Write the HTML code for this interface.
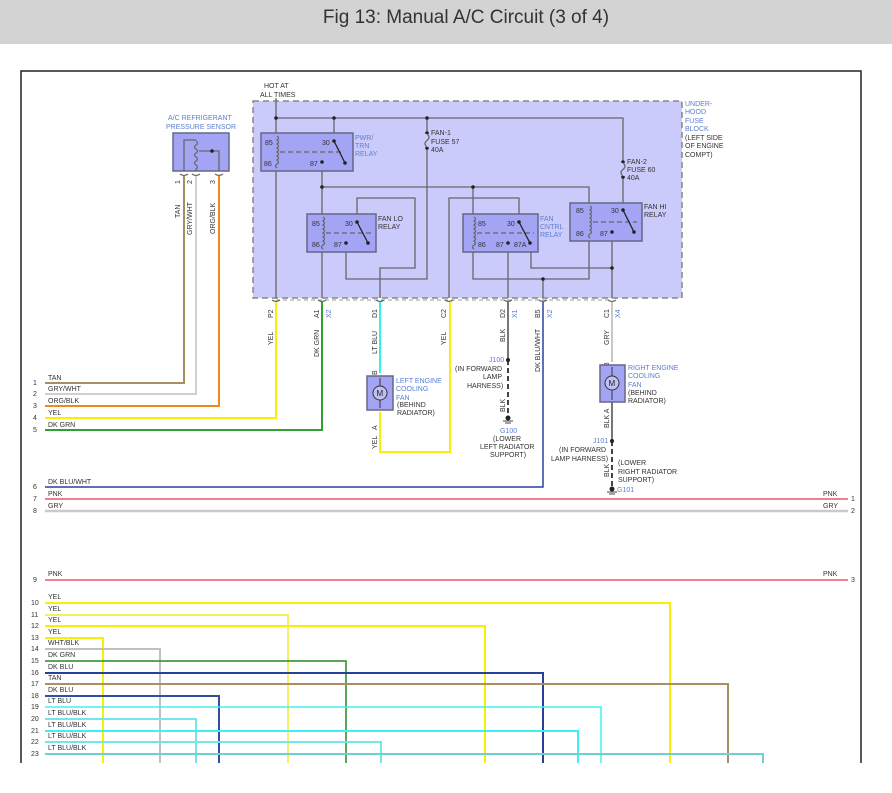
<!DOCTYPE html>
<html><head><meta charset="utf-8"><style>
html,body{margin:0;padding:0;background:#fff;}
svg{display:block;font-family:"Liberation Sans",sans-serif;}
.t{font-size:7px;fill:#333;}
.b{font-size:7px;fill:#5a7fd0;}
.g{stroke:#666;stroke-width:1.3;fill:none;}
.rl{fill:#a4a4f4;stroke:#666688;stroke-width:1.5;}
</style></head><body>
<svg width="892" height="793" viewBox="0 0 892 793" xmlns="http://www.w3.org/2000/svg">
<rect x="0" y="0" width="892" height="44" fill="#d3d3d3"/>
<text x="466" y="23" font-size="19" fill="#333" text-anchor="middle">Fig 13: Manual A/C Circuit (3 of 4)</text>
<!-- frame -->
<path d="M21,763 V71 H861 V763" fill="none" stroke="#222" stroke-width="1.5"/>

<!-- fuse block -->
<rect x="253" y="101" width="429" height="197" fill="#cbcbfb" stroke="#888" stroke-width="1.5" stroke-dasharray="6,4"/>
<text class="t" x="264" y="88">HOT AT</text><text class="t" x="260" y="97">ALL TIMES</text>
<text class="b" x="685" y="106">UNDER-</text><text class="b" x="685" y="114">HOOD</text><text class="b" x="685" y="123">FUSE</text><text class="b" x="685" y="131">BLOCK</text>
<text class="t" x="685" y="140">(LEFT SIDE</text><text class="t" x="685" y="148">OF ENGINE</text><text class="t" x="685" y="157">COMPT)</text>

<!-- internal wiring -->
<g class="g">
<path d="M276,98 V298"/>
<path d="M276,118 H623 V203"/>
<path d="M334,118 V133"/>
<path d="M427,118 V279 H346 V252"/>
<path d="M322,171 V298"/>
<path d="M322,187 H589 V203"/>
<path d="M473,187 V214"/>
<path d="M357,214 V198 H415 V268 H380 V298"/>
<path d="M519,214 V198 H449 V298"/>
<path d="M473,252 V279 H589 V241"/>
<path d="M543,279 V298"/>
<path d="M508,252 V298"/>
<path d="M531,252 V268 H612"/>
<path d="M612,241 V298"/>
</g>
<g fill="#222">
<circle cx="276" cy="118" r="1.8"/><circle cx="334" cy="118" r="1.8"/><circle cx="427" cy="118" r="1.8"/>
<circle cx="322" cy="187" r="1.8"/><circle cx="473" cy="187" r="1.8"/><circle cx="543" cy="279" r="1.8"/><circle cx="612" cy="268" r="1.8"/>
<circle cx="427" cy="133" r="1.8"/><circle cx="427" cy="148" r="1.8"/><circle cx="623" cy="162" r="1.8"/><circle cx="623" cy="177" r="1.8"/>
</g>
<!-- fuses -->
<rect x="424" y="134" width="6" height="13" fill="#cbcbfb"/><path d="M427,134 q4,3 0,6.5 q-4,3 0,6.5" class="g"/>
<rect x="620" y="163" width="6" height="13" fill="#cbcbfb"/><path d="M623,163 q4,3 0,6.5 q-4,3 0,6.5" class="g"/>
<text class="t" x="431" y="135">FAN-1</text><text class="t" x="431" y="144">FUSE 57</text><text class="t" x="431" y="152">40A</text>
<text class="t" x="627" y="164">FAN-2</text><text class="t" x="627" y="172">FUSE 60</text><text class="t" x="627" y="180">40A</text>

<!-- relays -->
<rect class="rl" x="261" y="133" width="92" height="38"/>
<rect class="rl" x="307" y="214" width="69" height="38"/>
<rect class="rl" x="463" y="214" width="75" height="38"/>
<rect class="rl" x="570" y="203" width="72" height="38"/>
<g class="g" stroke-width="1">
<path d="M277,136 q3,2 0,4 q3,2 0,4 q3,2 0,4 q3,2 0,4 q3,2 0,4 q3,2 0,4 q3,2 0,4 q-3,2 0,4" />
<path d="M323,217 q3,2 0,4 q3,2 0,4 q3,2 0,4 q3,2 0,4 q3,2 0,4 q3,2 0,4 q3,2 0,4 q-3,2 0,4"/>
<path d="M474,217 q3,2 0,4 q3,2 0,4 q3,2 0,4 q3,2 0,4 q3,2 0,4 q3,2 0,4 q3,2 0,4 q-3,2 0,4"/>
<path d="M590,206 q3,2 0,4 q3,2 0,4 q3,2 0,4 q3,2 0,4 q3,2 0,4 q3,2 0,4 q3,2 0,4 q-3,2 0,4"/>
<path d="M280,152 H342 M326,233 H372 M477,233 H534 M593,222 H637" stroke-dasharray="5,3"/>
</g>
<g stroke="#222" stroke-width="1.3">
<path d="M334,141 L345,163"/><path d="M357,222 L368,243"/><path d="M519,222 L530,243"/><path d="M623,210 L634,232"/>
</g>
<g fill="#222">
<circle cx="334" cy="141" r="1.8"/><circle cx="345" cy="163" r="1.8"/><circle cx="322" cy="162" r="1.8"/>
<circle cx="357" cy="222" r="1.8"/><circle cx="368" cy="243" r="1.8"/><circle cx="346" cy="243" r="1.8"/>
<circle cx="519" cy="222" r="1.8"/><circle cx="530" cy="243" r="1.8"/><circle cx="508" cy="243" r="1.8"/>
<circle cx="623" cy="210" r="1.8"/><circle cx="634" cy="232" r="1.8"/><circle cx="612" cy="232" r="1.8"/>
</g>
<g class="t">
<text x="265" y="145">85</text><text x="264" y="166">86</text><text x="322" y="145">30</text><text x="310" y="166">87</text>
<text x="312" y="226">85</text><text x="312" y="247">86</text><text x="345" y="226">30</text><text x="334" y="247">87</text>
<text x="478" y="226">85</text><text x="478" y="247">86</text><text x="507" y="226">30</text><text x="496" y="247">87</text><text x="514" y="247">87A</text>
<text x="576" y="213">85</text><text x="576" y="236">86</text><text x="611" y="213">30</text><text x="600" y="236">87</text>
</g>
<text class="b" x="355" y="140">PWR/</text><text class="b" x="355" y="148">TRN</text><text class="b" x="355" y="156">RELAY</text>
<text class="t" x="378" y="221">FAN LO</text><text class="t" x="378" y="229">RELAY</text>
<text class="b" x="540" y="221">FAN</text><text class="b" x="540" y="229">CNTRL</text><text class="b" x="540" y="237">RELAY</text>
<text class="t" x="644" y="209">FAN HI</text><text class="t" x="644" y="217">RELAY</text>
<!-- connector dashed line at bottom -->
<path d="M276,300 H612" stroke="#999" stroke-width="1" stroke-dasharray="4,3"/>
<g class="g" stroke-width="1">
<path d="M272,300 q4,3 8,0 M318,300 q4,3 8,0 M376,300 q4,3 8,0 M445,300 q4,3 8,0 M504,300 q4,3 8,0 M539,300 q4,3 8,0 M608,300 q4,3 8,0"/>
<path d="M180,174 q4,3 8,0 M192,174 q4,3 8,0 M215,174 q4,3 8,0"/>
</g>

<!-- connector labels -->
<g class="t" font-size="7">
<text transform="translate(273,318) rotate(-90)">P2</text>
<text transform="translate(319,318) rotate(-90)">A1</text>
<text transform="translate(377,318) rotate(-90)">D1</text>
<text transform="translate(446,318) rotate(-90)">C2</text>
<text transform="translate(505,318) rotate(-90)">D2</text>
<text transform="translate(540,318) rotate(-90)">B5</text>
<text transform="translate(609,318) rotate(-90)">C1</text>
<text transform="translate(273,345) rotate(-90)">YEL</text>
<text transform="translate(319,357) rotate(-90)">DK GRN</text>
<text transform="translate(377,354) rotate(-90)">LT BLU</text>
<text transform="translate(446,345) rotate(-90)">YEL</text>
<text transform="translate(505,342) rotate(-90)">BLK</text>
<text transform="translate(540,372) rotate(-90)">DK BLU/WHT</text>
<text transform="translate(609,345) rotate(-90)">GRY</text>
<text transform="translate(377,375) rotate(-90)">B</text>
<text transform="translate(377,430) rotate(-90)">A</text>
<text transform="translate(377,449) rotate(-90)">YEL</text>
<text transform="translate(505,412) rotate(-90)">BLK</text>
<text transform="translate(609,367) rotate(-90)">B</text>
<text transform="translate(609,428) rotate(-90)">BLK A</text>
<text transform="translate(609,477) rotate(-90)">BLK</text>
<text transform="translate(180,184) rotate(-90)">1</text>
<text transform="translate(192,184) rotate(-90)">2</text>
<text transform="translate(215,184) rotate(-90)">3</text>
<text transform="translate(180,218) rotate(-90)">TAN</text>
<text transform="translate(192,235) rotate(-90)">GRY/WHT</text>
<text transform="translate(215,234) rotate(-90)">ORG/BLK</text>
</g>
<g class="b">
<text transform="translate(331,318) rotate(-90)">X2</text>
<text transform="translate(517,318) rotate(-90)">X1</text>
<text transform="translate(552,318) rotate(-90)">X2</text>
<text transform="translate(620,318) rotate(-90)">X4</text>
</g>

<!-- sensor -->
<text class="b" x="168" y="120">A/C REFRIGERANT</text><text class="b" x="166" y="129">PRESSURE SENSOR</text>
<rect class="rl" x="173" y="133" width="56" height="38" fill="#c8c8fa"/>
<g class="g" stroke-width="1" stroke="#444">
<path d="M184,171 V140 H196 M196,141 q3,2 0,4 q-3,2 0,4 q3,2 0,4 q-3,2 0,4 q3,2 0,4 q-3,2 0,4 q3,2 0,4 V171 M199,151 H219 V171"/>
</g>
<circle cx="212" cy="151" r="1.8" fill="#222"/>

<!-- wires -->
<g fill="none" stroke-width="2">
<path d="M184,176 V383 H45" stroke="#a88f5e"/>
<path d="M196,176 V394 H45" stroke="#cfcfcf"/>
<path d="M219,176 V406 H45" stroke="#f08820"/>
<path d="M276,302 V418 H45" stroke="#f8f000"/>
<path d="M322,302 V430 H45" stroke="#30a030"/>
<path d="M380,302 V373" stroke="#30f0f0"/>
<path d="M380,412 V452 H450 V302" stroke="#f8f000"/>
<path d="M508,302 V360" stroke="#777"/>
<path d="M508,360 V415" stroke="#444" stroke-dasharray="5,3"/>
<path d="M543,302 V487 H45" stroke="#2a40a0" stroke-width="1.5"/>
<path d="M612,302 V362" stroke="#c8c8c8"/>
<path d="M612,402 V441" stroke="#777"/>
<path d="M612,441 V486" stroke="#444" stroke-dasharray="5,3"/>
<path d="M45,499 H848" stroke="#f07e95"/>
<path d="M45,511 H848" stroke="#cacaca" stroke-width="2.5"/>
<path d="M45,580 H848" stroke="#f07e95"/>
<path d="M45,603 H670 V763" stroke="#f8f000"/>
<path d="M45,615 H288 V763" stroke="#f5f060"/>
<path d="M45,626 H485 V763" stroke="#f8f000"/>
<path d="M45,638 H103 V763" stroke="#f8f000"/>
<path d="M45,649 H160 V763" stroke="#c0c0c0"/>
<path d="M45,661 H346 V763" stroke="#228b22" stroke-width="1.5"/>
<path d="M45,673 H543 V763" stroke="#2a3f98"/>
<path d="M45,684 H728 V763" stroke="#a89060"/>
<path d="M45,696 H219 V763" stroke="#3050a0"/>
<path d="M45,707 H601 V763" stroke="#40f0f0" stroke-width="1.5"/>
<path d="M45,719 H196 V763" stroke="#70e8e8"/>
<path d="M45,731 H578 V763" stroke="#40f0f0"/>
<path d="M45,742 H381 V763" stroke="#70e8e8"/>
<path d="M45,754 H763 V763" stroke="#70d0d0"/>
</g>

<!-- motors -->
<rect class="rl" x="367" y="376" width="26" height="34" fill="#c0c0f4"/>
<circle cx="380" cy="393" r="7" fill="#c0c0f4" stroke="#333"/><text x="376.5" y="396" font-size="8" fill="#222">M</text>
<path d="M380,378 V386 M380,400 V408" stroke="#333" stroke-width="1"/>
<rect class="rl" x="600" y="365" width="25" height="37" fill="#c0c0f4"/>
<circle cx="612" cy="383" r="7" fill="#c0c0f4" stroke="#333"/><text x="608.5" y="386" font-size="8" fill="#222">M</text>
<path d="M612,367 V376 M612,390 V400" stroke="#333" stroke-width="1"/>
<text class="b" x="396" y="383">LEFT ENGINE</text><text class="b" x="396" y="391">COOLING</text><text class="b" x="396" y="400">FAN</text>
<text class="t" x="397" y="407">(BEHIND</text><text class="t" x="397" y="415">RADIATOR)</text>
<text class="b" x="628" y="370">RIGHT ENGINE</text><text class="b" x="628" y="378">COOLING</text><text class="b" x="628" y="387">FAN</text>
<text class="t" x="628" y="395">(BEHIND</text><text class="t" x="628" y="403">RADIATOR)</text>

<!-- grounds -->
<circle cx="508" cy="360" r="2" fill="#222"/><circle cx="612" cy="441" r="2" fill="#222"/>
<circle cx="508" cy="418" r="2.5" fill="#222"/><path d="M503,421 H513 M505,423 H511" stroke="#444"/>
<circle cx="612" cy="489" r="2.5" fill="#222"/><path d="M607,492 H617 M609,494 H615" stroke="#444"/>
<text class="b" x="489" y="362">J100</text>
<text class="t" x="455" y="371">(IN FORWARD</text><text class="t" x="483" y="379">LAMP</text><text class="t" x="467" y="388">HARNESS)</text>
<text class="b" x="500" y="433">G100</text>
<text class="t" x="493" y="441">(LOWER</text><text class="t" x="480" y="449">LEFT RADIATOR</text><text class="t" x="490" y="457">SUPPORT)</text>
<text class="b" x="593" y="443">J101</text>
<text class="t" x="559" y="452">(IN FORWARD</text><text class="t" x="551" y="461">LAMP HARNESS)</text>
<text class="t" x="618" y="465">(LOWER</text><text class="t" x="618" y="474">RIGHT RADIATOR</text><text class="t" x="618" y="482">SUPPORT)</text>
<text class="b" x="617" y="492">G101</text>

<!-- row labels -->
<g class="t">
<text x="33" y="385">1</text><text x="48" y="380">TAN</text>
<text x="33" y="396">2</text><text x="48" y="391">GRY/WHT</text>
<text x="33" y="408">3</text><text x="48" y="403">ORG/BLK</text>
<text x="33" y="420">4</text><text x="48" y="415">YEL</text>
<text x="33" y="432">5</text><text x="48" y="427">DK GRN</text>
<text x="33" y="489">6</text><text x="48" y="484">DK BLU/WHT</text>
<text x="33" y="501">7</text><text x="48" y="496">PNK</text>
<text x="33" y="513">8</text><text x="48" y="508">GRY</text>
<text x="33" y="582">9</text><text x="48" y="576">PNK</text>
<text x="823" y="496">PNK</text><text x="851" y="501">1</text>
<text x="823" y="508">GRY</text><text x="851" y="513">2</text>
<text x="823" y="576">PNK</text><text x="851" y="582">3</text>
<text x="31" y="605">10</text><text x="48" y="599">YEL</text>
<text x="31" y="617">11</text><text x="48" y="611">YEL</text>
<text x="31" y="628">12</text><text x="48" y="622">YEL</text>
<text x="31" y="640">13</text><text x="48" y="634">YEL</text>
<text x="31" y="651">14</text><text x="48" y="645">WHT/BLK</text>
<text x="31" y="663">15</text><text x="48" y="657">DK GRN</text>
<text x="31" y="675">16</text><text x="48" y="669">DK BLU</text>
<text x="31" y="686">17</text><text x="48" y="680">TAN</text>
<text x="31" y="698">18</text><text x="48" y="692">DK BLU</text>
<text x="31" y="709">19</text><text x="48" y="703">LT BLU</text>
<text x="31" y="721">20</text><text x="48" y="715">LT BLU/BLK</text>
<text x="31" y="733">21</text><text x="48" y="727">LT BLU/BLK</text>
<text x="31" y="744">22</text><text x="48" y="738">LT BLU/BLK</text>
<text x="31" y="756">23</text><text x="48" y="750">LT BLU/BLK</text>
</g>
</svg>
</body></html>
